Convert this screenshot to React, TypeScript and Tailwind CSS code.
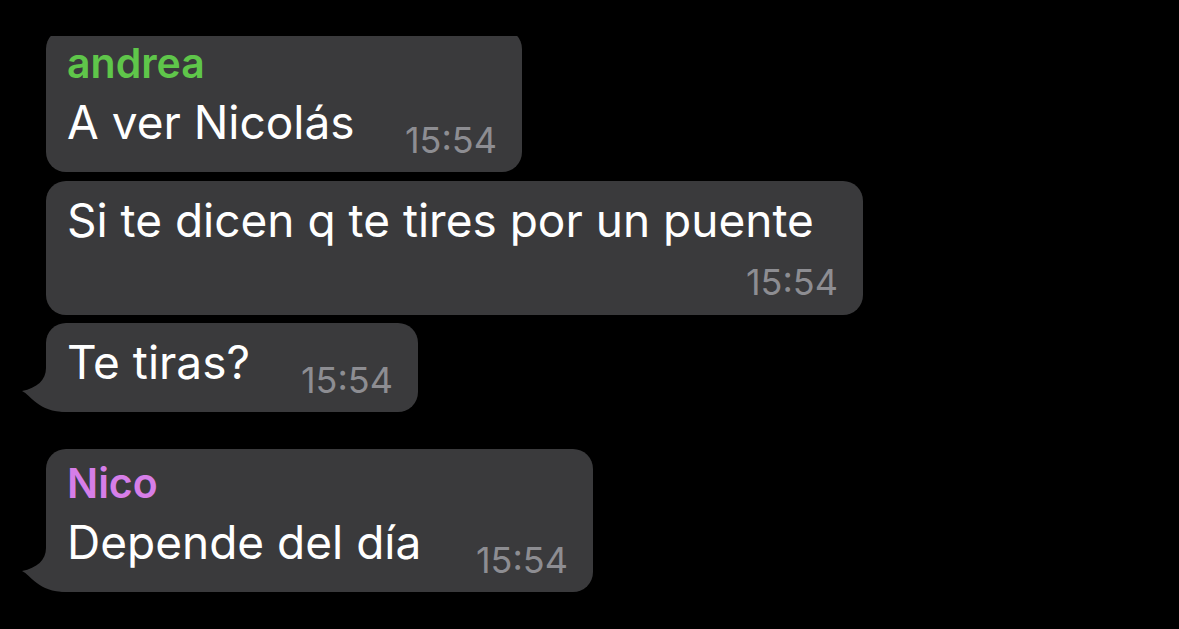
import React from 'react';

type Msg = {
  name?: string;
  nameColor?: string;
  text: string;
  width: string;
  timeBelow?: boolean;
  tail?: boolean;
  gap: string;
};

const messages: Msg[] = [
  { name: 'andrea', nameColor: 'text-[#5fc64a]', text: 'A ver Nicolás', width: 'w-[476px]', gap: 'mt-0' },
  { text: 'Si te dicen q te tires por un puente', width: 'w-[817px]', timeBelow: true, gap: 'mt-[9px]' },
  { text: 'Te tiras?', width: 'w-[372px]', tail: true, gap: 'mt-[8px]' },
  { name: 'Nico', nameColor: 'text-[#d67ee8]', text: 'Depende del día', width: 'w-[547px]', tail: true, gap: 'mt-[37px]' },
];

function Tail() {
  return (
    <svg className="absolute -left-[24px] bottom-0" width="44" height="44" viewBox="0 0 44 44">
      <path d="M24 0 C24 12 15 20 0 23 C9 27 16 44 44 44 L44 0 Z" fill="#3a3a3c" />
    </svg>
  );
}

function Bubble({ msg }: { msg: Msg }) {
  return (
    <div
      className={
        'relative rounded-[20px] bg-[#3a3a3c] pl-[21px] pr-[25px] ' +
        msg.width +
        ' ' +
        msg.gap +
        ' ' +
        (msg.name ? 'pt-[12px] pb-[12px]' : msg.timeBelow ? 'pt-[11px] pb-[13px]' : 'pt-[11px] pb-[12px]')
      }
    >
      {msg.tail && <Tail />}
      {msg.name && (
        <div className={'mb-[9px] text-[41px] font-semibold leading-[44px] ' + msg.nameColor}>{msg.name}</div>
      )}
      {msg.timeBelow ? (
        <>
          <div className="text-[46px] leading-[56px] text-white">{msg.text}</div>
          <div className="mt-[14px] text-right text-[36px] leading-[40px] text-[#8d8d92]">15:54</div>
        </>
      ) : (
        <div className="flex items-start justify-between">
          <div className="text-[46px] leading-[56px] text-white">{msg.text}</div>
          <div className="mt-[26px] text-[36px] leading-[40px] text-[#8d8d92]">15:54</div>
        </div>
      )}
    </div>
  );
}

export default function App() {
  return (
    <div className="relative h-[629px] w-[1179px] overflow-hidden bg-black font-['Inter',sans-serif]">
      <div className="flex flex-col items-start pl-[46px] pt-[29px]">
        {messages.map((m, i) => (
          <Bubble key={i} msg={m} />
        ))}
      </div>
      <div className="absolute left-0 right-0 top-0 h-[36px] bg-black" />
    </div>
  );
}
